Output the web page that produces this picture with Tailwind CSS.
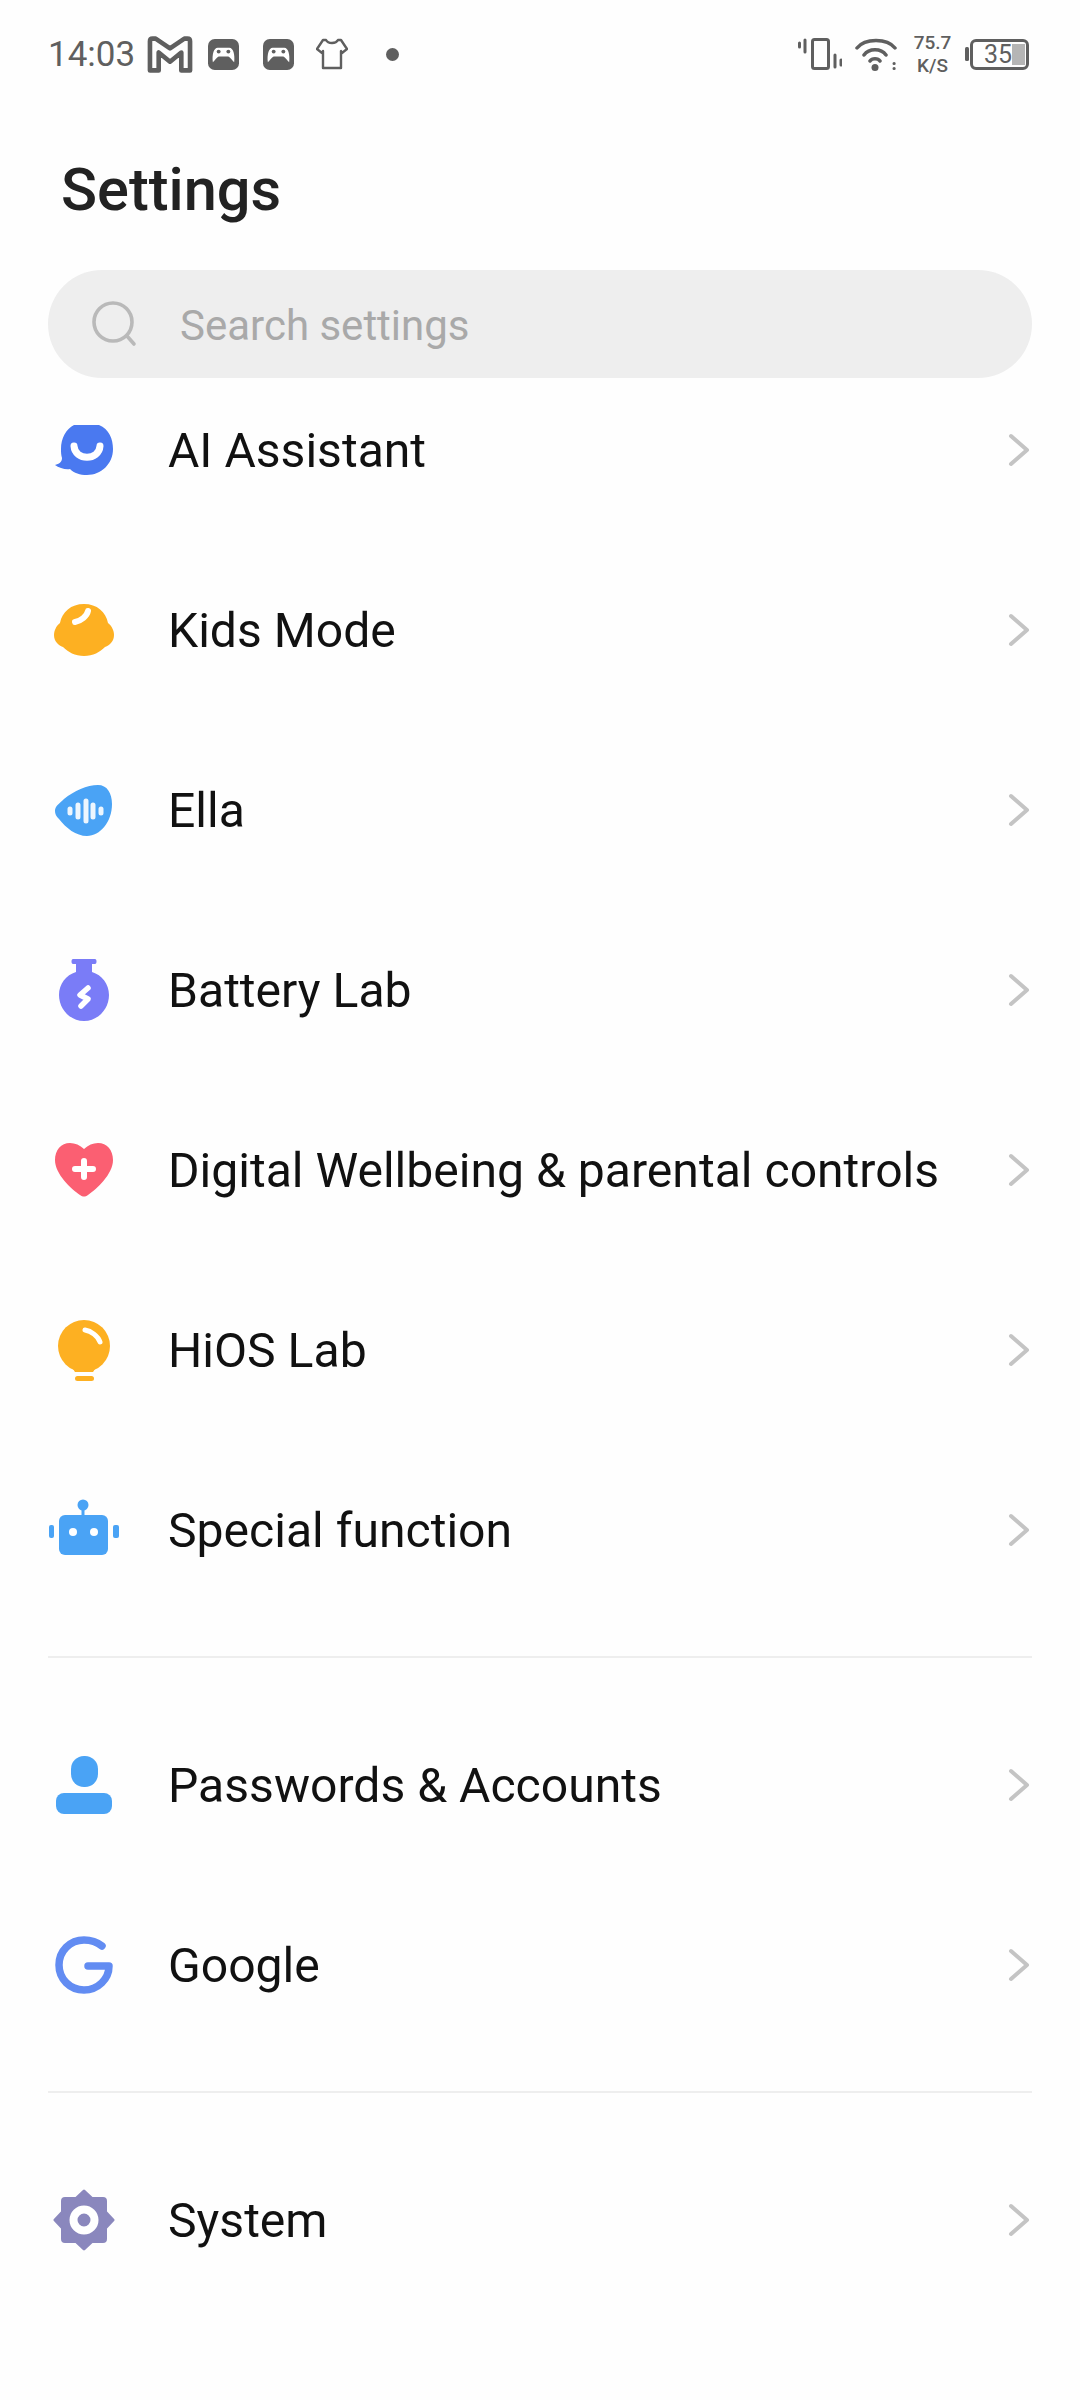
<!DOCTYPE html>
<html lang="en">
<head>
    <meta charset="UTF-8">
    <meta name="viewport" content="width=device-width, initial-scale=1.0">
    <title>Settings</title>
    <script src="https://cdn.jsdelivr.net/npm/@tailwindcss/browser@4"></script>
</head>
<body class="bg-[#fefefe] text-[#111] font-['Roboto',sans-serif]">
<div class="w-[1080px] h-[2400px] overflow-hidden">

    <!-- status bar -->
    <div class="h-[108px] pl-[48px] pr-[51px] flex items-center justify-between text-[#5f5f5f]">
        <div class="flex items-center">
            <span class="text-[35px] leading-none w-[99px]">14:03</span>
            <svg class="w-[46px] h-[37px]" viewBox="0 0 44 36" fill="none" stroke="#5f5f5f" stroke-width="4.5" stroke-linejoin="round"><path d="M2.5 5 Q2.5 2.5 5 2.5 L8 2.5 L22 12 L36 2.5 L39 2.5 Q41.5 2.5 41.5 5 L41.5 33.5 L33 33.5 L33 16 L22 25 L11 16 L11 33.5 L2.5 33.5 Z"/></svg>
            <svg class="w-[31px] h-[31px] ml-[15px]" viewBox="0 0 32 32"><rect width="32" height="32" rx="7" fill="#5f5f5f"/><path d="M5 24 C4 16 6 9 10 9 L22 9 C26 9 28 16 27 24 C25 22 23 19 21 18 L11 18 C9 19 7 22 5 24 Z" fill="#fff"/><circle cx="11" cy="13" r="2" fill="#5f5f5f"/><circle cx="21" cy="13" r="2" fill="#5f5f5f"/></svg>
            <svg class="w-[31px] h-[31px] ml-[24px]" viewBox="0 0 32 32"><rect width="32" height="32" rx="7" fill="#5f5f5f"/><path d="M5 24 C4 16 6 9 10 9 L22 9 C26 9 28 16 27 24 C25 22 23 19 21 18 L11 18 C9 19 7 22 5 24 Z" fill="#fff"/><circle cx="11" cy="13" r="2" fill="#5f5f5f"/><circle cx="21" cy="13" r="2" fill="#5f5f5f"/></svg>
            <svg class="w-[32px] h-[32px] ml-[22px]" viewBox="0 0 32 32" fill="none" stroke="#5f5f5f" stroke-width="2.4" stroke-linejoin="round"><path d="M10 2 C12 6 20 6 22 2 L25 2 L31 11 L26 15 L25 13 L25 30 L7 30 L7 13 L6 15 L1 11 L7 2 Z"/></svg>
            <span class="w-[13px] h-[13px] rounded-full bg-[#5f5f5f] ml-[38px]"></span>
        </div>
        <div class="flex items-center">
            <svg class="w-[44px] h-[32px]" viewBox="0 0 44 32" fill="none" stroke="#5f5f5f" stroke-linecap="round"><rect x="14.5" y="1.5" width="16" height="29" rx="2" stroke-width="3"/><path d="M1.5 5 V9 M7 2 V14 M37 17 V29 M43 22 V27" stroke-width="3"/></svg>
            <svg class="w-[42px] h-[33px] ml-[13px]" viewBox="0 0 42 33" fill="none" stroke="#5f5f5f" stroke-width="3.5" stroke-linecap="round"><path d="M2 10 C10 0 32 0 40 10 M9 17 C14 10 26 10 31 17 M15 23 C17 20 23 20 25 23"/><circle cx="20" cy="29.5" r="3.5" fill="#5f5f5f" stroke="none"/><path d="M39 25.5 H39.2 M39 30.5 H39.2" stroke-width="3"/></svg>
            <div class="ml-[16px] w-[39px] flex flex-col items-center text-[19px] leading-[23px] font-medium">
                <span>75.7</span>
                <span>K/S</span>
            </div>
            <svg class="w-[4px] h-[14px] ml-[13px]" viewBox="0 0 4 14"><rect width="4" height="14" rx="1.5" fill="#5f5f5f"/></svg>
            <div class="relative w-[59px] h-[31px] ml-[1px] border-[3px] border-[#5f5f5f] rounded-[6px] flex items-center pl-[11px]">
                <span class="absolute right-[1px] top-[2px] bottom-[2px] w-[13px] bg-[#b5b5b5]"></span>
                <span class="relative text-[25px] leading-none">35</span>
            </div>
        </div>
    </div>

    <!-- title -->
    <h1 class="pl-[61px] h-[64px] mt-[49px] text-[59.5px] font-medium leading-[66px] text-[#222]">Settings</h1>

    <!-- search -->
    <div class="mx-[48px] mt-[49px] h-[108px] rounded-full bg-[#eeeeee] flex items-center pl-[43px]">
        <svg class="w-[48px] h-[48px]" viewBox="0 0 48 48" fill="none" stroke="#b9b9b9" stroke-width="3.6" stroke-linecap="round"><circle cx="22" cy="22" r="19"/><path d="M36 36 L43 44"/></svg>
        <span class="ml-[41px] text-[42px] leading-[52px] pt-[3px] text-[#a9a9a9]">Search settings</span>
    </div>

    <!-- rows -->
    <div class="mt-[-18px]">
        <div class="h-[180px] px-[48px] flex items-center">
            <div class="w-[72px] flex justify-center">
                <svg class="w-[60px] h-[52px]" viewBox="0 0 60 52"><path d="M20 1 L45 1 C55 5 59 15 59 25 C59 40 47 51 33 51 C26 51 20 49 16 45 C12 46 5 44 1 41 C5 40 8 38 8 34 C7 31 7 28 7 25 C7 14 12 5 20 1 Z" fill="#4a79f0"/><path d="M20 22 C21 37 45 37 46 22" fill="none" stroke="#fff" stroke-width="7" stroke-linecap="round"/></svg>
            </div>
            <span class="ml-[48px] pt-[3px] text-[48.1px] flex-1">AI Assistant</span>
            <svg class="w-[24px] h-[38px]" viewBox="0 0 24 38" fill="none" stroke="#c4c4c4" stroke-width="4" stroke-linecap="round" stroke-linejoin="round"><path d="M3 5 L19 19 L3 33"/></svg>
        </div>
        <div class="h-[180px] px-[48px] flex items-center">
            <div class="w-[72px] flex justify-center">
                <svg class="w-[60px] h-[52px]" viewBox="0 0 60 52"><path d="M30 0 C43 0 52 8 54 19 C58 22 60 27 60 31 C60 37 56 41 51 43 C46 48 39 52 30 52 C21 52 14 48 9 43 C4 41 0 37 0 31 C0 27 2 22 6 19 C8 8 17 0 30 0 Z" fill="#fdb022"/><path d="M21 18 C27 17 33 12 34 7" fill="none" stroke="#fff" stroke-width="6" stroke-linecap="round"/></svg>
            </div>
            <span class="ml-[48px] pt-[3px] text-[48.1px] flex-1">Kids Mode</span>
            <svg class="w-[24px] h-[38px]" viewBox="0 0 24 38" fill="none" stroke="#c4c4c4" stroke-width="4" stroke-linecap="round" stroke-linejoin="round"><path d="M3 5 L19 19 L3 33"/></svg>
        </div>
        <div class="h-[180px] px-[48px] flex items-center">
            <div class="w-[72px] flex justify-center">
                <svg class="w-[60px] h-[52px]" viewBox="0 0 60 52"><path d="M1 27 C1 22 5 20 10 15 C20 7 33 1 44 1 C53 1 58 9 58 20 C58 38 46 52 33 52 C22 52 12 44 5 35 C2 32 1 30 1 27 Z" fill="#4aa3f5"/><path d="M16 25 V29 M24 21 V33 M32 17 V37 M39 21 V33 M47 25 V29" stroke="#fff" stroke-opacity="0.9" stroke-width="5" stroke-linecap="round"/></svg>
            </div>
            <span class="ml-[48px] pt-[3px] text-[48.1px] flex-1">Ella</span>
            <svg class="w-[24px] h-[38px]" viewBox="0 0 24 38" fill="none" stroke="#c4c4c4" stroke-width="4" stroke-linecap="round" stroke-linejoin="round"><path d="M3 5 L19 19 L3 33"/></svg>
        </div>
        <div class="h-[180px] px-[48px] flex items-center">
            <div class="w-[72px] flex justify-center">
                <svg class="w-[50px] h-[62px]" viewBox="0 0 50 62"><path d="M14 0 H36 C38 0 38 5 36 5 L33 5 V13 C43 16 50 25 50 36 C50 50 39 62 25 62 C11 62 0 50 0 36 C0 25 7 16 17 13 V5 L14 5 C12 5 12 0 14 0 Z" fill="#7a7cf7"/><path d="M29 29 L21 36 L29 40 L22 47" fill="none" stroke="#fff" stroke-width="5.5" stroke-linecap="round" stroke-linejoin="round"/></svg>
            </div>
            <span class="ml-[48px] pt-[3px] text-[48.1px] flex-1">Battery Lab</span>
            <svg class="w-[24px] h-[38px]" viewBox="0 0 24 38" fill="none" stroke="#c4c4c4" stroke-width="4" stroke-linecap="round" stroke-linejoin="round"><path d="M3 5 L19 19 L3 33"/></svg>
        </div>
        <div class="h-[180px] px-[48px] flex items-center">
            <div class="w-[72px] flex justify-center">
                <svg class="w-[58px] h-[54px]" viewBox="0 0 58 54"><path d="M29 6 C33 2 38 0 43 0 C52 0 58 7 58 17 C58 31 42 46 33 52 C30 54 28 54 25 52 C16 46 0 31 0 17 C0 7 6 0 15 0 C20 0 25 2 29 6 Z" fill="#fb5f72"/><path d="M29 18 V34 M20 26 H38" stroke="#fff" stroke-width="6" stroke-linecap="round"/></svg>
            </div>
            <span class="ml-[48px] pt-[3px] text-[48.1px] flex-1">Digital Wellbeing &amp; parental controls</span>
            <svg class="w-[24px] h-[38px]" viewBox="0 0 24 38" fill="none" stroke="#c4c4c4" stroke-width="4" stroke-linecap="round" stroke-linejoin="round"><path d="M3 5 L19 19 L3 33"/></svg>
        </div>
        <div class="h-[180px] px-[48px] flex items-center">
            <div class="w-[72px] flex justify-center">
                <svg class="w-[52px] h-[61px]" viewBox="0 0 52 61"><circle cx="26" cy="26" r="26" fill="#fdb022"/><path d="M13 46 L17 52 H35 L39 46 Z" fill="#fdb022"/><path d="M27 10 C33 11 40 16 42 22" fill="none" stroke="#fff" stroke-width="5" stroke-linecap="round"/><rect x="17" y="56" width="19" height="5" rx="2.5" fill="#fdb022"/></svg>
            </div>
            <span class="ml-[48px] pt-[3px] text-[48.1px] flex-1">HiOS Lab</span>
            <svg class="w-[24px] h-[38px]" viewBox="0 0 24 38" fill="none" stroke="#c4c4c4" stroke-width="4" stroke-linecap="round" stroke-linejoin="round"><path d="M3 5 L19 19 L3 33"/></svg>
        </div>
        <div class="h-[180px] px-[48px] flex items-center">
            <div class="w-[72px] flex justify-center">
                <svg class="w-[70px] h-[56px] mb-[6px]" viewBox="0 0 70 56"><rect x="10" y="16" width="49" height="40" rx="6" fill="#4aa3f5"/><rect x="32.5" y="9" width="3" height="8" fill="#4aa3f5"/><circle cx="34" cy="6" r="5.5" fill="#4aa3f5"/><rect x="0" y="26" width="5" height="13" rx="2" fill="#4aa3f5"/><rect x="64" y="26" width="6" height="13" rx="2" fill="#4aa3f5"/><circle cx="24" cy="33" r="4" fill="#fff"/><circle cx="45" cy="33" r="4" fill="#fff"/></svg>
            </div>
            <span class="ml-[48px] pt-[3px] text-[48.1px] flex-1">Special function</span>
            <svg class="w-[24px] h-[38px]" viewBox="0 0 24 38" fill="none" stroke="#c4c4c4" stroke-width="4" stroke-linecap="round" stroke-linejoin="round"><path d="M3 5 L19 19 L3 33"/></svg>
        </div>

        <div class="mx-[48px] mt-[36px] mb-[37px] h-[2px] bg-[#eeeeee]"></div>

        <div class="h-[180px] px-[48px] flex items-center">
            <div class="w-[72px] flex justify-center">
                <svg class="w-[56px] h-[58px]" viewBox="0 0 56 58"><rect x="15" y="0" width="27" height="31" rx="13" fill="#4aa3f5"/><rect x="0" y="37" width="56" height="21" rx="8" fill="#4aa3f5"/></svg>
            </div>
            <span class="ml-[48px] pt-[3px] text-[48.1px] flex-1">Passwords &amp; Accounts</span>
            <svg class="w-[24px] h-[38px]" viewBox="0 0 24 38" fill="none" stroke="#c4c4c4" stroke-width="4" stroke-linecap="round" stroke-linejoin="round"><path d="M3 5 L19 19 L3 33"/></svg>
        </div>
        <div class="h-[180px] px-[48px] flex items-center">
            <div class="w-[72px] flex justify-center">
                <svg class="w-[58px] h-[58px]" viewBox="0 0 58 58" fill="none" stroke="#628cf2" stroke-width="7.5" stroke-linecap="round" stroke-linejoin="round"><path d="M47 10 C42 6 36 4 29 4 C15 4 4 15 4 29 C4 43 15 54 29 54 C43 54 54 43 54 30 L33 30"/></svg>
            </div>
            <span class="ml-[48px] pt-[3px] text-[48.1px] flex-1">Google</span>
            <svg class="w-[24px] h-[38px]" viewBox="0 0 24 38" fill="none" stroke="#c4c4c4" stroke-width="4" stroke-linecap="round" stroke-linejoin="round"><path d="M3 5 L19 19 L3 33"/></svg>
        </div>

        <div class="mx-[48px] mt-[36px] mb-[37px] h-[2px] bg-[#eeeeee]"></div>

        <div class="h-[180px] px-[48px] flex items-center">
            <div class="w-[72px] flex justify-center">
                <svg class="w-[62px] h-[62px]" viewBox="0 0 62 62"><path d="M31 2 L39 9.5 L50 9.5 C52 9.5 52.5 10 52.5 12 L52.5 23 L60 31 L52.5 39 L52.5 50 C52.5 52 52 52.5 50 52.5 L39 52.5 L31 60 L23 52.5 L12 52.5 C10 52.5 9.5 52 9.5 50 L9.5 39 L2 31 L9.5 23 L9.5 12 C9.5 10 10 9.5 12 9.5 L23 9.5 Z" fill="#8a87bd" stroke="#8a87bd" stroke-width="3" stroke-linejoin="round"/><circle cx="31" cy="31" r="10.5" fill="none" stroke="#fff" stroke-width="8"/></svg>
            </div>
            <span class="ml-[48px] pt-[3px] text-[48.1px] flex-1">System</span>
            <svg class="w-[24px] h-[38px]" viewBox="0 0 24 38" fill="none" stroke="#c4c4c4" stroke-width="4" stroke-linecap="round" stroke-linejoin="round"><path d="M3 5 L19 19 L3 33"/></svg>
        </div>
    </div>
</div>
</body>
</html>
